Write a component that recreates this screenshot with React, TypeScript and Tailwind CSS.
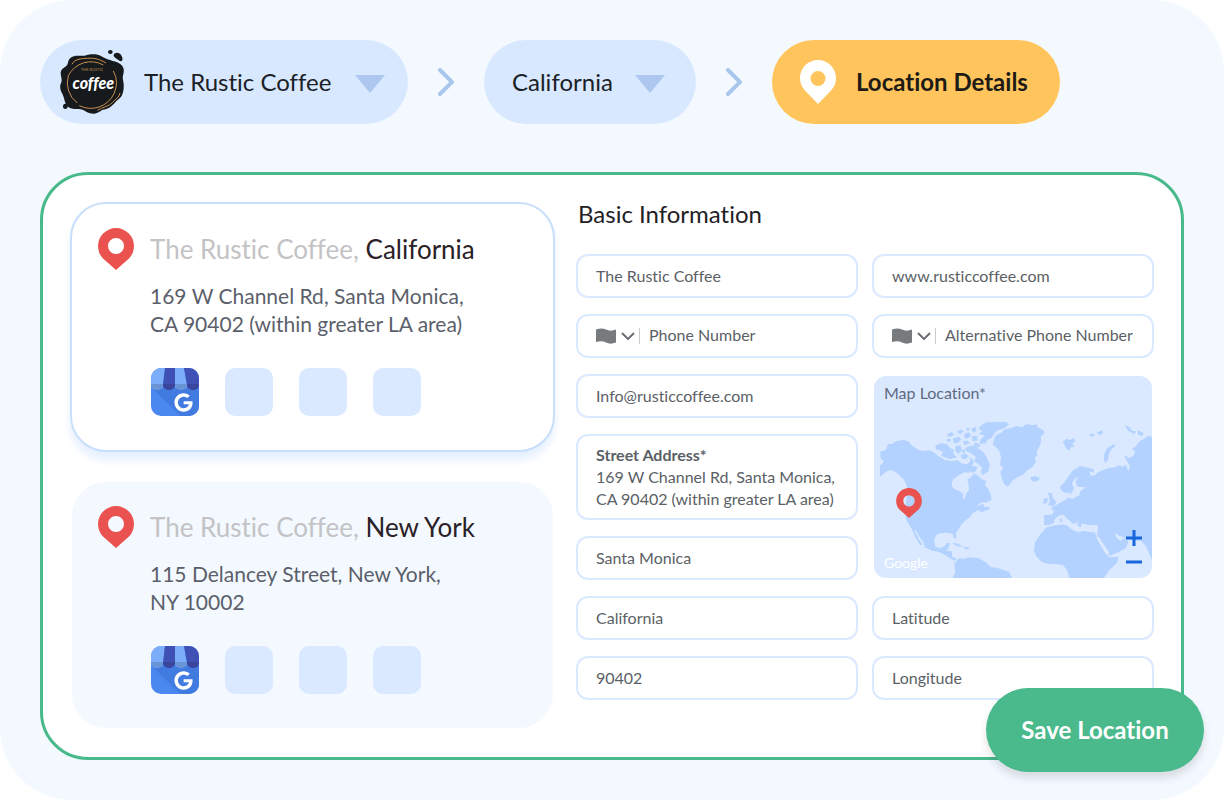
import React, { useState } from 'react';
import { FaGoogle } from 'react-icons/fa';

const Caret = () => (
  <svg viewBox="0 0 30 22" className="w-[30px] h-[22px] shrink-0 pointer-events-none" aria-hidden="true">
    <path d="M0 4H30L15 22Z" fill="#adc7f0" />
  </svg>
);

const Separator = () => (
  <svg viewBox="0 0 16 28" className="w-4 h-7 shrink-0" fill="none" aria-hidden="true">
    <path d="M2 2L14 14L2 26" stroke="#a9c6ec" strokeWidth="4" strokeLinecap="round" />
  </svg>
);

const RedPin = ({ className }: { className: string }) => (
  <svg viewBox="0 0 36 42" className={className} aria-hidden="true">
    <path
      fillRule="evenodd"
      fill="#e9524f"
      d="M18 42L5 30.5A18 18 0 1 1 31 30.5ZM18 10A8 8 0 1 0 18 26A8 8 0 1 0 18 10Z"
    />
  </svg>
);

const CoffeeLogo = () => (
  <svg viewBox="30 16 198 198" className="w-[66px] h-[66px] shrink-0" aria-hidden="true">
    <path
      fill="#161a1d"
      d="M62 42C75 32 90 38 104 36C124 31 140 30 154 38C166 45 172 47 186 51C202 55 218 60 221 76C223 90 216 96 219 108C222 122 222 134 219 146C215 164 204 166 196 176C186 188 174 198 158 198C146 206 136 213 120 209C108 206 100 196 86 196C70 196 52 194 47 180C42 168 43 162 37 150C30 138 28 128 34 116C38 104 28 92 34 80C40 70 50 70 53 60C55 52 56 46 62 42Z"
    />
    <ellipse cx="181" cy="25" rx="7" ry="6" fill="#161a1d" />
    <path d="M192 31C200 24 209 27 213 34C217 40 220 48 215 52C209 55 204 48 198 44C193 41 189 36 192 31Z" fill="#161a1d" />
    <ellipse cx="46" cy="188" rx="7" ry="8" fill="#161a1d" />
    <g fill="none" stroke="#c98f4f" strokeWidth="3">
      <path d="M160 64A76 76 0 0 0 55 96A76 76 0 0 0 82 178" />
      <path d="M88 186A77 77 0 0 0 192 150A76 76 0 0 0 190 82" />
      <path d="M66 62C72 48 92 44 112 44C134 42 152 48 168 58" />
      <path d="M142 200C158 190 178 188 188 176C196 166 208 162 210 148" />
    </g>
    <text x="126" y="81" textAnchor="middle" fill="#b9824a" fontSize="12" className="font-['Lato',sans-serif]">THE RUSTIC</text>
    <text x="130" y="136" textAnchor="middle" fill="#fff" fontSize="48" fontWeight="900" fontStyle="italic" className="font-['Lato',sans-serif]">coffee</text>
  </svg>
);

const BusinessIcon = () => (
  <svg viewBox="0 0 48 48" className="size-12 rounded-[10px]" role="img" aria-label="Google Business Profile">
    <path d="M0 0H48V48H0Z" fill="#4a88f0" />
    <path d="M2 21L29 48H48V20Z" fill="#427be0" />
    <path d="M0 0H14L12 17A6 5 0 0 1 0 17Z" fill="#7badf8" />
    <path d="M14 0H24V17A6 5 0 0 1 12 17Z" fill="#3f51b5" />
    <path d="M24 0H33L36 17A6 5 0 0 1 24 17Z" fill="#7badf8" />
    <path d="M33 0H48V17A6 5 0 0 1 36 17Z" fill="#3f51b5" />
    <path d="M0 16H12V17A6 5 0 0 1 0 17Z" fill="#6a94d8" />
    <path d="M12 16H24V17A6 5 0 0 1 12 17Z" fill="#3a469c" />
    <path d="M24 16H36V17A6 5 0 0 1 24 17Z" fill="#6a94d8" />
    <path d="M36 16H48V17A6 5 0 0 1 36 17Z" fill="#3a469c" />
    <FaGoogle x={23} y={25} size={19} color="#fff" />
  </svg>
);

const WorldMap = () => (
  <svg viewBox="12 18 834 606" preserveAspectRatio="xMidYMid slice" className="absolute inset-0 size-full" aria-hidden="true">
    <g fill="#b4d2ff">
      {/* North America */}
      <path d="M30 320V287L42 274L31 264V245L48 239L54 222L66 222L78 214L100 209L115 214L125 226L145 240L165 243L178 241L190 246L205 258L225 270L245 274L262 270L275 280L290 283L300 276L301 260L312 275L306 288L322 290L318 302L302 301L296 309L285 306L268 315L250 328L245 340L247 352L254 358L270 364L280 372L278 385L284 388L288 372L297 360L296 345L292 330L303 322L312 310L325 318L335 328L348 332L345 345L355 358L362 372L365 390L350 397L332 398L318 410L340 401L343 412L356 410L360 417L335 427L325 420L308 430L300 442L288 450L275 462L268 474L258 488V508L252 504L248 491L230 488L210 490L198 496L192 511L196 530L212 535L224 528L230 519L240 519L236 534L228 542L246 544L246 560L262 568L252 572L235 562L220 552L205 545L185 542L165 532L160 517L148 500L138 482L131 478L146 507L159 526L150 524L136 502L128 482L118 465L108 448L105 420L108 395L112 370L111 348L102 330L88 316L76 306L62 300L48 305Z" />
      {/* Arctic islands */}
      <path d="M335 165L350 157L408 156L418 163L400 176L384 180L374 189L364 205L352 209L348 220L328 222L332 208L345 197L326 193L338 183L325 176Z" />
      <path d="M300 228L316 226L328 238L340 246L350 262L360 285L354 305L338 315L332 306L338 294L325 282L312 274L318 260L300 248L288 244L286 234Z" />
      <path d="M196 228L212 219L230 222L240 234L252 240L250 252L262 262L240 268L224 262L212 256L220 246L198 238Z" />
      <path d="M232 192L246 186L252 194L242 200L232 200ZM260 186L272 178L282 184L270 192ZM248 206L266 200L274 208L264 218L252 220ZM284 192L296 186L304 196L292 206L282 202ZM304 176L316 170L320 184L308 188ZM278 214L292 212L300 220L284 226ZM256 228L272 226L276 242L264 252L256 242ZM306 198L322 198L322 212L308 214ZM296 292L314 288L318 304L304 308Z" />
      <path d="M272 256L286 250L296 258L288 268L276 266ZM316 216L332 226L326 232L312 224ZM230 208L242 206L242 214L232 216ZM292 172L300 176L296 182L288 180ZM278 238L286 240L284 248L276 248Z" />
      {/* Greenland */}
      <path d="M372 208L378 196L394 188L404 178L424 174L440 168L456 172L470 162L488 166L500 163L502 172L520 180L524 190L512 200L514 214L508 230L500 244L502 256L494 264L498 274L488 290L470 302L460 314L445 320L430 330L420 342L412 350L402 342L396 326L391 306L400 294L390 284L393 262L388 242L376 230L368 224Z" />
      <path d="M482 322L496 318L509 323L507 330L496 335L484 332Z" />
      <path d="M578 215L590 206L600 210L612 204L616 212L608 220L612 230L602 232L598 242L590 236L584 226ZM656 196L668 190L676 196L666 200ZM680 188L696 180L700 188L688 196Z" />
      <path d="M732 222L736 228L722 240L716 256L714 270L706 280L701 268L704 248L712 234ZM764 164L780 172L786 182L798 184L794 192L774 182ZM802 180L820 188L818 198L804 194Z" />
      {/* Europe and Asia */}
      <path d="M522 465V435L546 434L552 424L542 414L558 406L574 396L590 388L592 376L600 364L588 370L574 362L570 350L584 336L596 318L610 300L630 288L650 292L670 298L673 308L658 304L662 318L674 316L685 306L700 300L716 294L736 292L746 286L756 290L768 286L775 304L780 288L770 272L762 254L776 264L790 258L796 246L786 238L798 228L810 212L824 206L832 198L846 200V570L838 552L828 528L812 512L790 512L776 506L758 502L745 496L734 488L740 504L752 512L762 504L776 514L768 534L742 548L718 558L706 540L690 514L681 498L684 466L664 468L652 464L634 464L624 454L614 462L620 470L610 476L600 462L584 440L572 436L560 442L550 460L536 466Z" />
      <path d="M534 368L546 370L548 384L560 396L552 408L534 406L540 392ZM522 386L534 384L532 398L519 402Z" />
      {/* Africa and South America */}
      <path d="M530 472L556 466L590 462L602 476L624 486L640 482L674 487L682 502L694 528L706 550L718 562L746 560L740 580L716 602L702 624H598L592 602L580 586L560 582L535 582L515 575L498 558L492 540L496 515L512 492Z" />
      <path d="M248 624L256 606L253 580L268 564L282 566L296 562L325 564L346 576L362 590L390 596L418 606L426 624Z" />
      <path d="M245 518L264 521L282 531L262 529ZM282 530L298 532L294 538L282 536Z" />
    </g>
    <g fill="#dae9ff">
      <path d="M627 320L616 334L622 350L648 352L632 362L628 376L608 386L588 382L590 376L604 370L612 356L606 340L614 326Z" />
      <path d="M552 450L566 438L584 434L600 446L614 462L634 460L656 466L682 466V487L658 486L632 480L616 484L600 472L580 462L554 464Z" />
      <path d="M678 500L686 500L702 524L718 548L712 556L698 536Z" />
    </g>
    <path d="M580 432L592 430L602 442L616 452L608 462L600 452L588 444ZM570 446L576 446L576 456L570 456ZM624 454L636 458L632 472L622 468Z" fill="#b4d2ff" />
  </svg>
);

const places = [
  { id: 'ca', region: 'California', lines: ['169 W Channel Rd, Santa Monica,', 'CA 90402 (within greater LA area)'] },
  { id: 'ny', region: 'New York', lines: ['115 Delancey Street, New York,', 'NY 10002'] },
];

interface PlaceCardProps {
  region: string;
  lines: string[];
  active: boolean;
}

const PlaceCard: React.FC<PlaceCardProps> = ({ region, lines, active }) => (
  <article
    className={`grid grid-cols-[36px_1fr] gap-x-4 rounded-[36px] border-2 px-[26px] pt-6 pb-[34px] ${
      active ? 'border-[#c8dffc] bg-white shadow-[0_8px_8px_#e6f0ff]' : 'border-transparent bg-[#f3f9ff] bg-clip-padding'
    }`}
  >
    <RedPin className="w-9 h-[42px]" />
    <h2 className="text-[26px] leading-[42px] whitespace-nowrap text-[#c3c3c6]">
      The Rustic Coffee, <span className="text-[#2a2127]">{region}</span>
    </h2>
    <div className="col-start-2">
      <address className="mt-3 not-italic text-[21px] leading-7 text-[#5b5f6b] whitespace-nowrap">
        {lines[0]}
        <br />
        {lines[1]}
      </address>
      <div className="mt-[30px] flex gap-[26px] pl-px">
        <BusinessIcon />
        <div className="size-12 rounded-[10px] bg-[#dae9ff]" />
        <div className="size-12 rounded-[10px] bg-[#dae9ff]" />
        <div className="size-12 rounded-[10px] bg-[#dae9ff]" />
      </div>
    </div>
  </article>
);

const boxClass = 'rounded-xl border-2 border-[#dae9ff] bg-white';
const textClass = 'text-base leading-[22px] text-[#5b5f66] placeholder:text-[#5b5f66] placeholder:opacity-100 outline-none';

const TextField = ({ label, value }: { label: string; value?: string }) => (
  <input
    type="text"
    aria-label={label}
    defaultValue={value}
    placeholder={label}
    className={`${boxClass} ${textClass} h-11 w-full px-[18px] pb-0.5`}
  />
);

const PhoneField = ({ label }: { label: string }) => (
  <div className={`${boxClass} flex h-11 items-center pl-[18px] pr-2`}>
    <button type="button" aria-label={`${label} country`} className="flex items-center gap-[5px] shrink-0">
      <svg viewBox="0 0 20 16" className="w-5 h-4" aria-hidden="true">
        <path d="M0 1.5C4 0 7 0 10 1.5S16 3 20 1.5V14.5C16 16 13 16 10 14.5S4 13 0 14Z" fill="#777b7e" />
      </svg>
      <svg viewBox="0 0 14 8" className="w-[14px] h-2" fill="none" aria-hidden="true">
        <path d="M1 1L7 7L13 1" stroke="#6c7075" strokeWidth="2" />
      </svg>
    </button>
    <span className="ml-1 h-4 w-px bg-[#c9cbd0]" />
    <input type="tel" aria-label={label} placeholder={label} className={`${textClass} ml-[9px] min-w-0 flex-1 pb-0.5`} />
  </div>
);

const MapField = () => (
  <div className="row-span-3 p-0.5">
    <section aria-label="Map Location" className="relative h-full overflow-hidden rounded-xl bg-[#dae9ff]">
      <WorldMap />
      <h3 className="relative px-[10px] pt-1.5 text-base leading-[22px] text-[#5f6a80]">Map Location*</h3>
      <RedPin className="absolute left-[22px] top-28 w-[26px] h-[30px]" />
      <span className="absolute left-[10px] bottom-1 text-sm leading-[22px] text-white">Google</span>
      <div className="absolute right-[10px] bottom-2 flex flex-col gap-2">
        <button type="button" aria-label="Zoom in" className="flex size-4 items-center justify-center">
          <svg viewBox="0 0 16 16" className="size-4" aria-hidden="true">
            <path d="M8 0V16M0 8H16" stroke="#1767dc" strokeWidth="3" />
          </svg>
        </button>
        <button type="button" aria-label="Zoom out" className="flex size-4 items-center justify-center">
          <svg viewBox="0 0 16 16" className="size-4" aria-hidden="true">
            <path d="M0 8H16" stroke="#1767dc" strokeWidth="3" />
          </svg>
        </button>
      </div>
    </section>
  </div>
);

const App: React.FC = () => {
  const [business, setBusiness] = useState('The Rustic Coffee');
  const [region, setRegion] = useState('California');

  return (
    <div className="min-h-screen rounded-[72px] bg-[#f3f9ff] p-10 font-['Lato','Liberation_Sans',sans-serif] [font-variant-ligatures:none]">
      <nav aria-label="Breadcrumb" className="flex items-center gap-[30px]">
        <label className="flex h-[84px] w-[368px] items-center rounded-full bg-[#d8e9ff] pl-5 pr-[23px]">
          <CoffeeLogo />
          <select
            aria-label="Business"
            value={business}
            onChange={(e) => setBusiness(e.target.value)}
            className="ml-[18px] min-w-0 flex-1 appearance-none bg-transparent text-2xl text-[#1b2126] outline-none"
          >
            <option>The Rustic Coffee</option>
          </select>
          <Caret />
        </label>
        <Separator />
        <label className="flex h-[84px] w-[212px] items-center rounded-full bg-[#d8e9ff] pl-7 pr-[31px]">
          <select
            aria-label="Region"
            value={region}
            onChange={(e) => setRegion(e.target.value)}
            className="min-w-0 flex-1 appearance-none bg-transparent text-2xl text-[#1b2126] outline-none"
          >
            <option>California</option>
            <option>New York</option>
          </select>
          <Caret />
        </label>
        <Separator />
        <a
          href="#details"
          aria-current="page"
          className="flex h-[84px] w-[288px] items-center gap-5 rounded-full bg-[#ffc55c] px-7 text-2xl font-bold whitespace-nowrap text-[#1e1b16]"
        >
          <svg viewBox="0 0 36 44" className="w-9 h-11 shrink-0" aria-hidden="true">
            <path
              fillRule="evenodd"
              fill="#fff"
              d="M18 0C8 0 0 8 0 18C0 22.500 1.500 26.500 4.500 30L18 44L31.500 30C34.500 26.500 36 22.500 36 18C36 8 28 0 18 0ZM18 11A7.500 7.500 0 1 1 18 26A7.500 7.500 0 1 1 18 11Z"
            />
          </svg>
          Location Details
        </a>
      </nav>

      <main
        id="details"
        className="relative mt-12 grid grid-cols-[485fr_578fr] gap-[21px] rounded-[48px] border-[3px] border-[#48b98b] bg-white p-[27px]"
      >
        <div className="flex flex-col gap-7">
          {places.map((place) => (
            <PlaceCard key={place.id} region={place.region} lines={place.lines} active={place.region === region} />
          ))}
        </div>

        <form onSubmit={(e) => e.preventDefault()}>
          <h1 className="mb-7 px-0.5 text-2xl leading-6 text-[#1f2125]">Basic Information</h1>
          <div className="grid grid-cols-2 gap-x-[14px] gap-y-4">
            <TextField label="Business name" value="The Rustic Coffee" />
            <TextField label="Website" value="www.rusticcoffee.com" />
            <PhoneField label="Phone Number" />
            <PhoneField label="Alternative Phone Number" />
            <TextField label="Email" value="Info@rusticcoffee.com" />
            <MapField />
            <div className={`${boxClass} flex h-[86px] flex-col px-[18px] py-2`}>
              <label htmlFor="street" className="text-base leading-[22px] font-bold text-[#5b5f66]">
                Street Address*
              </label>
              <textarea
                id="street"
                rows={2}
                defaultValue={'169 W Channel Rd, Santa Monica,\nCA 90402 (within greater LA area)'}
                className={`${textClass} h-11 w-full resize-none overflow-hidden whitespace-pre`}
              />
            </div>
            <TextField label="City" value="Santa Monica" />
            <TextField label="State" value="California" />
            <TextField label="Latitude" />
            <TextField label="ZIP code" value="90402" />
            <TextField label="Longitude" />
          </div>
          <button
            type="submit"
            className="absolute -right-[23px] -bottom-[15px] h-[84px] w-[218px] rounded-full bg-[#4aba8c] text-2xl font-bold text-white shadow-[0_6px_8px_rgba(0,0,0,0.12)]"
          >
            Save Location
          </button>
        </form>
      </main>
    </div>
  );
};

export default App;
